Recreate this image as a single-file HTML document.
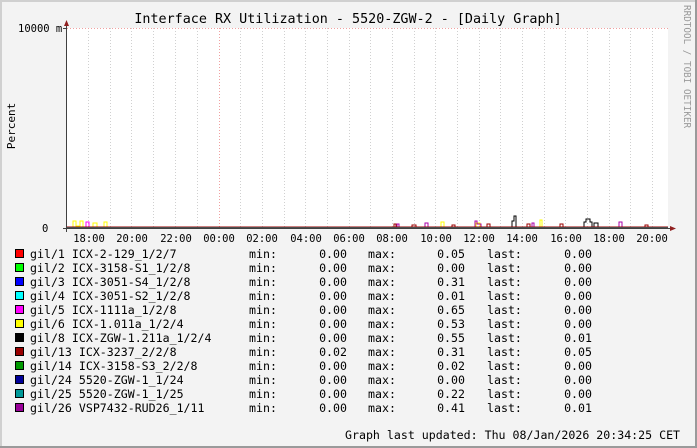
<!DOCTYPE html><html><head><style>
html,body{margin:0;padding:0;width:697px;height:448px;overflow:hidden;background:#f3f3f3}
text{font-family:"DejaVu Sans Mono","Liberation Mono",monospace}
</style></head><body>
<svg width="697" height="448" xmlns="http://www.w3.org/2000/svg">
<rect x="0" y="0" width="697" height="448" fill="#f3f3f3"/>
<rect x="0" y="0" width="697" height="2" fill="#d0d0d0"/>
<rect x="0" y="0" width="2" height="448" fill="#d0d0d0"/>
<rect x="695" y="0" width="2" height="448" fill="#9a9a9a"/>
<rect x="0" y="446" width="697" height="2" fill="#9a9a9a"/>
<rect x="67" y="28" width="601" height="200" fill="#ffffff"/>
<g stroke="#d0d0d0" stroke-width="1" stroke-dasharray="1,2">
<line x1="88.5" y1="28" x2="88.5" y2="228"/><line x1="110.5" y1="28" x2="110.5" y2="228"/><line x1="131.5" y1="28" x2="131.5" y2="228"/><line x1="153.5" y1="28" x2="153.5" y2="228"/><line x1="175.5" y1="28" x2="175.5" y2="228"/><line x1="197.5" y1="28" x2="197.5" y2="228"/><line x1="240.5" y1="28" x2="240.5" y2="228"/><line x1="262.5" y1="28" x2="262.5" y2="228"/><line x1="284.5" y1="28" x2="284.5" y2="228"/><line x1="305.5" y1="28" x2="305.5" y2="228"/><line x1="327.5" y1="28" x2="327.5" y2="228"/><line x1="349.5" y1="28" x2="349.5" y2="228"/><line x1="370.5" y1="28" x2="370.5" y2="228"/><line x1="392.5" y1="28" x2="392.5" y2="228"/><line x1="414.5" y1="28" x2="414.5" y2="228"/><line x1="435.5" y1="28" x2="435.5" y2="228"/><line x1="457.5" y1="28" x2="457.5" y2="228"/><line x1="479.5" y1="28" x2="479.5" y2="228"/><line x1="500.5" y1="28" x2="500.5" y2="228"/><line x1="522.5" y1="28" x2="522.5" y2="228"/><line x1="544.5" y1="28" x2="544.5" y2="228"/><line x1="565.5" y1="28" x2="565.5" y2="228"/><line x1="587.5" y1="28" x2="587.5" y2="228"/><line x1="609.5" y1="28" x2="609.5" y2="228"/><line x1="630.5" y1="28" x2="630.5" y2="228"/><line x1="652.5" y1="28" x2="652.5" y2="228"/>
</g>
<line x1="219.5" y1="28" x2="219.5" y2="228" stroke="#f0a0a0" stroke-dasharray="1,2"/>
<line x1="67" y1="28.5" x2="668" y2="28.5" stroke="#f0a0a0" stroke-dasharray="1,2"/>
<polyline fill="none" stroke="#ffff00" points="70,227 73,227 73,221 76,221 76,226 80,226 80,221 83,221 83,227 93,227 93,223 97,223 97,227 104,227 104,222 107,222 107,227"/>
<polyline fill="none" stroke="#ff00ff" points="84,227 86,227 86,222 89,222 89,227"/>
<polyline fill="none" stroke="#ffff00" points="439,227 441,227 441,222 444,222 444,227 476,227 476,223 480,223 480,227 540,227 540,220 542,220 542,227"/>
<polyline fill="none" stroke="#000000" points="510,227 512,227 512,221 514,221 514,216 516,216 516,227 584,227 584,222 586,222 586,219 590,219 590,222 592,222 592,227 594,227 594,223 598,223 598,227"/>
<polyline fill="none" stroke="#aa00aa" points="395,227 397,227 397,224 399,224 399,227 425,227 425,223 428,223 428,227 475,227 475,221 477,221 477,224 481,224 481,227 532,227 532,223 534,223 534,227 619,227 619,222 622,222 622,227"/>
<polyline fill="none" stroke="#990000" points="67,227 668,227"/>
<polyline fill="none" stroke="#990000" points="392,227 394,227 394,224 396,224 396,227 412,227 412,225 416,225 416,227 452,227 452,225 455,225 455,227 487,227 487,224 490,224 490,227 527,227 527,224 530,224 530,227 560,227 560,224 563,224 563,227 645,227 645,225 648,225 648,227"/>
<polyline fill="none" stroke="#009999" points="67,228 668,228"/>
<line x1="66.5" y1="24" x2="66.5" y2="232" stroke="#404040"/>
<line x1="63" y1="228.5" x2="672" y2="228.5" stroke="#404040"/>
<line x1="63" y1="28.5" x2="67" y2="28.5" stroke="#404040"/>
<polygon points="64,26 69,26 66.5,20" fill="#902020"/>
<polygon points="670,226 670,231 676,228.5" fill="#902020"/>
<g font-size="10.5" fill="#000">
<text x="18" y="32">10000 m</text>
<text x="42" y="232">0</text>
</g>
<text x="348" y="23" font-size="13.4" text-anchor="middle">Interface RX Utilization - 5520-ZGW-2 - [Daily Graph]</text>
<text transform="translate(15,126) rotate(-90)" font-size="11" text-anchor="middle">Percent</text>
<text transform="translate(684,5) rotate(90)" font-size="9.3" fill="#999999">RRDTOOL / TOBI OETIKER</text>
<g font-size="10.5" text-anchor="middle">
<text x="89" y="242">18:00</text><text x="132" y="242">20:00</text><text x="176" y="242">22:00</text><text x="219" y="242">00:00</text><text x="262" y="242">02:00</text><text x="306" y="242">04:00</text><text x="349" y="242">06:00</text><text x="392" y="242">08:00</text><text x="436" y="242">10:00</text><text x="479" y="242">12:00</text><text x="522" y="242">14:00</text><text x="566" y="242">16:00</text><text x="609" y="242">18:00</text><text x="652" y="242">20:00</text>
</g>
<g font-size="11.6" fill="#000">
<g transform="translate(0,0)"><rect x="15.5" y="249.5" width="8" height="8" fill="#ff0000" stroke="#000"/><text x="30" y="258">gil/1 ICX-2-129_1/2/7</text></g>
<g transform="translate(0,14)"><rect x="15.5" y="249.5" width="8" height="8" fill="#00ff00" stroke="#000"/><text x="30" y="258">gil/2 ICX-3158-S1_1/2/8</text></g>
<g transform="translate(0,28)"><rect x="15.5" y="249.5" width="8" height="8" fill="#0000ff" stroke="#000"/><text x="30" y="258">gil/3 ICX-3051-S4_1/2/8</text></g>
<g transform="translate(0,42)"><rect x="15.5" y="249.5" width="8" height="8" fill="#00ffff" stroke="#000"/><text x="30" y="258">gil/4 ICX-3051-S2_1/2/8</text></g>
<g transform="translate(0,56)"><rect x="15.5" y="249.5" width="8" height="8" fill="#ff00ff" stroke="#000"/><text x="30" y="258">gil/5 ICX-1111a_1/2/8</text></g>
<g transform="translate(0,70)"><rect x="15.5" y="249.5" width="8" height="8" fill="#ffff00" stroke="#000"/><text x="30" y="258">gil/6 ICX-1.011a_1/2/4</text></g>
<g transform="translate(0,84)"><rect x="15.5" y="249.5" width="8" height="8" fill="#000000" stroke="#000"/><text x="30" y="258">gil/8 ICX-ZGW-1.211a_1/2/4</text></g>
<g transform="translate(0,98)"><rect x="15.5" y="249.5" width="8" height="8" fill="#990000" stroke="#000"/><text x="30" y="258">gil/13 ICX-3237_2/2/8</text></g>
<g transform="translate(0,112)"><rect x="15.5" y="249.5" width="8" height="8" fill="#009900" stroke="#000"/><text x="30" y="258">gil/14 ICX-3158-S3_2/2/8</text></g>
<g transform="translate(0,126)"><rect x="15.5" y="249.5" width="8" height="8" fill="#000099" stroke="#000"/><text x="30" y="258">gil/24 5520-ZGW-1_1/24</text></g>
<g transform="translate(0,140)"><rect x="15.5" y="249.5" width="8" height="8" fill="#009999" stroke="#000"/><text x="30" y="258">gil/25 5520-ZGW-1_1/25</text></g>
<g transform="translate(0,154)"><rect x="15.5" y="249.5" width="8" height="8" fill="#990099" stroke="#000"/><text x="30" y="258">gil/26 VSP7432-RUD26_1/11</text></g>
<g>
<text x="249" y="258">min:</text><text x="249" y="272">min:</text><text x="249" y="286">min:</text><text x="249" y="300">min:</text><text x="249" y="314">min:</text><text x="249" y="328">min:</text><text x="249" y="342">min:</text><text x="249" y="356">min:</text><text x="249" y="370">min:</text><text x="249" y="384">min:</text><text x="249" y="398">min:</text><text x="249" y="412">min:</text>
<text x="368" y="258">max:</text><text x="368" y="272">max:</text><text x="368" y="286">max:</text><text x="368" y="300">max:</text><text x="368" y="314">max:</text><text x="368" y="328">max:</text><text x="368" y="342">max:</text><text x="368" y="356">max:</text><text x="368" y="370">max:</text><text x="368" y="384">max:</text><text x="368" y="398">max:</text><text x="368" y="412">max:</text>
<text x="487" y="258">last:</text><text x="487" y="272">last:</text><text x="487" y="286">last:</text><text x="487" y="300">last:</text><text x="487" y="314">last:</text><text x="487" y="328">last:</text><text x="487" y="342">last:</text><text x="487" y="356">last:</text><text x="487" y="370">last:</text><text x="487" y="384">last:</text><text x="487" y="398">last:</text><text x="487" y="412">last:</text>
</g>
<g text-anchor="end">
<text x="347" y="258">0.00</text><text x="347" y="272">0.00</text><text x="347" y="286">0.00</text><text x="347" y="300">0.00</text><text x="347" y="314">0.00</text><text x="347" y="328">0.00</text><text x="347" y="342">0.00</text><text x="347" y="356">0.02</text><text x="347" y="370">0.00</text><text x="347" y="384">0.00</text><text x="347" y="398">0.00</text><text x="347" y="412">0.00</text>
<text x="465" y="258">0.05</text><text x="465" y="272">0.00</text><text x="465" y="286">0.31</text><text x="465" y="300">0.01</text><text x="465" y="314">0.65</text><text x="465" y="328">0.53</text><text x="465" y="342">0.55</text><text x="465" y="356">0.31</text><text x="465" y="370">0.02</text><text x="465" y="384">0.00</text><text x="465" y="398">0.22</text><text x="465" y="412">0.41</text>
<text x="592" y="258">0.00</text><text x="592" y="272">0.00</text><text x="592" y="286">0.00</text><text x="592" y="300">0.00</text><text x="592" y="314">0.00</text><text x="592" y="328">0.00</text><text x="592" y="342">0.01</text><text x="592" y="356">0.05</text><text x="592" y="370">0.00</text><text x="592" y="384">0.00</text><text x="592" y="398">0.00</text><text x="592" y="412">0.01</text>
</g>
<text x="345" y="439">Graph last updated: Thu 08/Jan/2026 20:34:25 CET</text>
</g>
</svg>
</body></html>
